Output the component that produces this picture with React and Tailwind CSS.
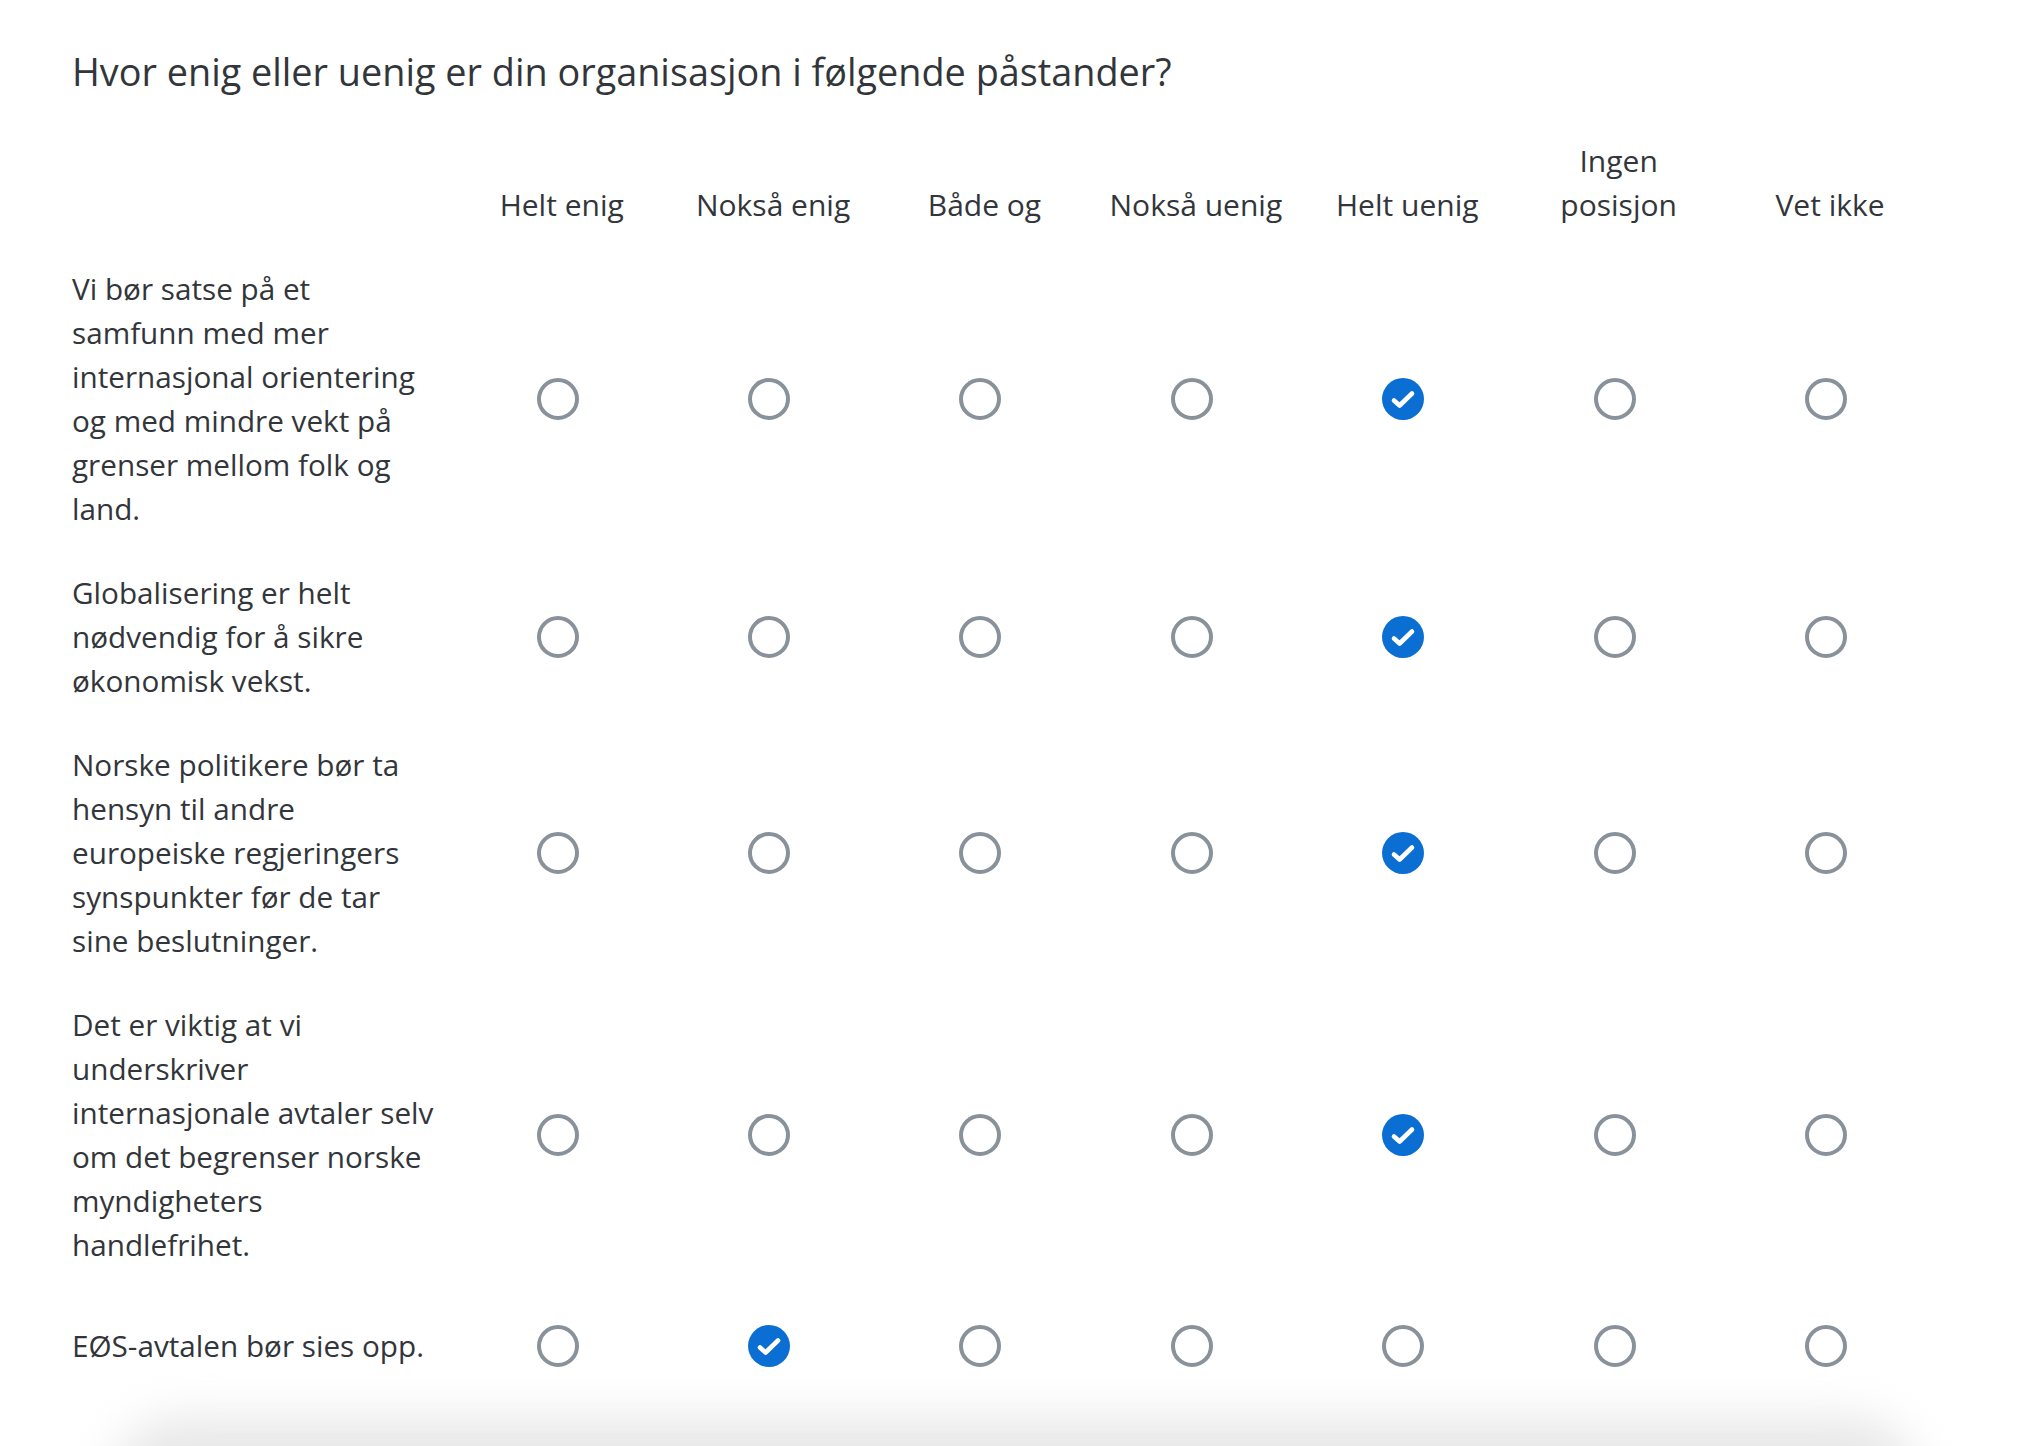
import { useState } from 'react';

const columns = ['Helt enig', 'Nokså enig', 'Både og', 'Nokså uenig', 'Helt uenig', 'Ingen posisjon', 'Vet ikke'];

// Linjene er brutt som i skjemaet
const statements = [
    { lines: ['Vi bør satse på et', 'samfunn med mer', 'internasjonal orientering', 'og med mindre vekt på', 'grenser mellom folk og', 'land.'], answer: 4 },
    { lines: ['Globalisering er helt', 'nødvendig for å sikre', 'økonomisk vekst.'], answer: 4 },
    { lines: ['Norske politikere bør ta', 'hensyn til andre', 'europeiske regjeringers', 'synspunkter før de tar', 'sine beslutninger.'], answer: 4 },
    { lines: ['Det er viktig at vi', 'underskriver', 'internasjonale avtaler selv', 'om det begrenser norske', 'myndigheters', 'handlefrihet.'], answer: 4 },
    { lines: ['EØS-avtalen bør sies opp.'], answer: 1 },
];

// Radioknapp – tom ring eller blå sirkel med hake
const Radio = ({ checked, onClick, label }) => (
    <button
        type="button"
        role="radio"
        aria-checked={checked}
        aria-label={label}
        onClick={onClick}
        className={`w-[42px] h-[42px] rounded-full flex items-center justify-center ${
            checked ? 'bg-[#0b6ed2]' : 'border-[4px] border-[#89919a] bg-white'
        }`}
    >
        {checked && (
            <svg viewBox="0 0 42 42" className="w-[42px] h-[42px]" fill="none">
                <path d="M12 22.5l5.6 5L30 15.5" stroke="white" strokeWidth="4.6" strokeLinecap="round" strokeLinejoin="round" />
            </svg>
        )}
    </button>
);

export default function App() {
    const [answers, setAnswers] = useState(statements.map(s => s.answer));

    const select = (row, col) => {
        setAnswers(prev => prev.map((a, i) => (i === row ? col : a)));
    };

    return (
        <div
            className="h-[1446px] overflow-hidden bg-white text-[#32363a]"
            style={{ fontFamily: '"Open Sans", "Noto Sans", sans-serif' }}
        >
            <div className="px-[72px] pt-[49px]">
                <h1 className="text-[37.8px] leading-[1.2] font-normal">
                    Hvor enig eller uenig er din organisasjon i følgende påstander?
                </h1>

                {/* Kolonneoverskrifter */}
                <div className="mt-[45px] grid grid-cols-[384px_repeat(7,211.4px)] items-end pb-[20px]">
                    <div />
                    {columns.map(col => (
                        <div key={col} className="px-[10px] text-center text-[30px] leading-[44px]">
                            {col}
                        </div>
                    ))}
                </div>

                {/* Påstander */}
                {statements.map((s, row) => (
                    <div key={row} className="grid grid-cols-[384px_repeat(7,211.4px)] py-[20px]">
                        <div className="text-[29.7px] leading-[44px] flex flex-col justify-center whitespace-nowrap">
                            {s.lines.map(line => (
                                <span key={line}>{line}</span>
                            ))}
                        </div>
                        {columns.map((col, c) => (
                            <div key={col} className="min-h-[78px] flex items-center justify-center pr-[8px]">
                                <Radio
                                    checked={answers[row] === c}
                                    label={col}
                                    onClick={() => select(row, c)}
                                />
                            </div>
                        ))}
                    </div>
                ))}
            </div>

            {/* Skygge fra kortet under */}
            <div className="mx-[110px] mt-[12px] h-[140px] rounded-[80px] bg-[#e8e8e8] blur-[22px]" />
        </div>
    );
}
